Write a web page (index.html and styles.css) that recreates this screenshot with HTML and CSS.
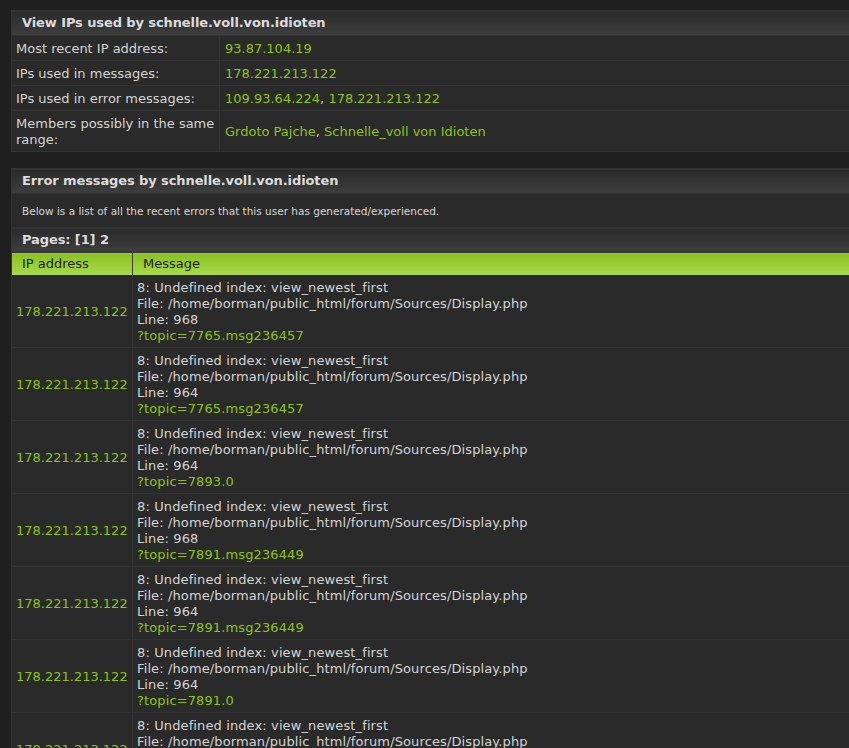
FILE: index.html
```html
<!DOCTYPE html>
<html>
<head>
<meta charset="utf-8">
<link rel="stylesheet" href="styles.css">
</head>
<body>
<div class="page">
  <table class="block info">
    <tr><th colspan="2" class="cat">View IPs used by schnelle.voll.von.idioten</th></tr>
    <tr><td class="lbl">Most recent IP address:</td><td class="val"><a>93.87.104.19</a></td></tr>
    <tr><td class="lbl">IPs used in messages:</td><td class="val"><a>178.221.213.122</a></td></tr>
    <tr><td class="lbl">IPs used in error messages:</td><td class="val"><a>109.93.64.224</a>, <a>178.221.213.122</a></td></tr>
    <tr><td class="lbl">Members possibly in the same range:</td><td class="val"><a>Grdoto Pajche</a>, <a>Schnelle_voll von Idioten</a></td></tr>
  </table>

  <table class="block errors">
    <tr><th colspan="2" class="cat">Error messages by schnelle.voll.von.idioten</th></tr>
    <tr><td colspan="2" class="desc">Below is a list of all the recent errors that this user has generated/experienced.</td></tr>
    <tr><th colspan="2" class="cat pages">Pages: [1] 2</th></tr>
    <tr class="titlebg"><td class="c1">IP address</td><td class="c2">Message</td></tr>
    <tr><td class="ip"><a>178.221.213.122</a></td><td class="msg">8: Undefined index: view_newest_first<br>File: /home/borman/public_html/forum/Sources/Display.php<br>Line: 968<br><a>?topic=7765.msg236457</a></td></tr>
    <tr><td class="ip"><a>178.221.213.122</a></td><td class="msg">8: Undefined index: view_newest_first<br>File: /home/borman/public_html/forum/Sources/Display.php<br>Line: 964<br><a>?topic=7765.msg236457</a></td></tr>
    <tr><td class="ip"><a>178.221.213.122</a></td><td class="msg">8: Undefined index: view_newest_first<br>File: /home/borman/public_html/forum/Sources/Display.php<br>Line: 964<br><a>?topic=7893.0</a></td></tr>
    <tr><td class="ip"><a>178.221.213.122</a></td><td class="msg">8: Undefined index: view_newest_first<br>File: /home/borman/public_html/forum/Sources/Display.php<br>Line: 968<br><a>?topic=7891.msg236449</a></td></tr>
    <tr><td class="ip"><a>178.221.213.122</a></td><td class="msg">8: Undefined index: view_newest_first<br>File: /home/borman/public_html/forum/Sources/Display.php<br>Line: 964<br><a>?topic=7891.msg236449</a></td></tr>
    <tr><td class="ip"><a>178.221.213.122</a></td><td class="msg">8: Undefined index: view_newest_first<br>File: /home/borman/public_html/forum/Sources/Display.php<br>Line: 964<br><a>?topic=7891.0</a></td></tr>
    <tr><td class="ip"><a>178.221.213.122</a></td><td class="msg">8: Undefined index: view_newest_first<br>File: /home/borman/public_html/forum/Sources/Display.php<br>Line: 964<br><a>?topic=7891.0</a></td></tr>
  </table>
</div>
</body>
</html>
```
FILE: styles.css
```css
html, body {
  margin: 0;
  padding: 0;
  background: #1f1f1f;
  overflow: hidden;
}
body {
  font-family: "DejaVu Sans", Verdana, sans-serif;
  font-size: 13px;
  color: #d4d4d4;
}
.page {
  padding: 10px 0 0 11px;
  width: 920px;
}
.block {
  width: 100%;
  border-collapse: collapse;
  background: #2a2a2a;
  border: 1px solid #333;
  margin-bottom: 16px;
}
.block td, .block th {
  padding: 0;
}
a {
  color: #8cc320;
  text-decoration: none;
}
.cat {
  text-align: left;
  font-weight: bold;
  font-size: 13px;
  letter-spacing: -0.1px;
  color: #dcdcdc;
  height: 24px;
  padding: 0 0 0 10px !important;
  background: linear-gradient(#2a2a2a, #3e3e3e);
  border-bottom: 1px solid #333;
  line-height: 16px;
}
.info .lbl {
  width: 199px;
  padding: 5px 4px 3px 4px !important;
  line-height: 16px;
  border-right: 1px solid #333;
  border-bottom: 1px solid #333;
  height: 16px;
}
.info .val {
  padding: 5px 5px 3px 5px !important;
  line-height: 16px;
  border-bottom: 1px solid #333;
}
.errors .desc {
  font-size: 10.5px;
  padding: 8px 10px 8px 10px !important;
  height: 17px;
  color: #d8d8d8;
  border-bottom: 1px solid #333;
  line-height: 16px;
}
.errors .pages {
  height: 24px;
}
.titlebg td {
  background: linear-gradient(#8ac21f, #a8d94e);
  color: #222;
  height: 22px;
  padding: 0 0 0 10px !important;
  line-height: 16px;
}
.titlebg .c1 {
  border-right: 1px solid #3a3a3a;
}
.ip {
  width: 112px;
  padding: 0 4px !important;
  border-right: 1px solid #333;
  border-bottom: 1px solid #333;
  vertical-align: middle;
}
.msg {
  padding: 5px 4px 3px 4px !important;
  line-height: 16px;
  letter-spacing: 0.12px;
  border-bottom: 1px solid #333;
}
```
